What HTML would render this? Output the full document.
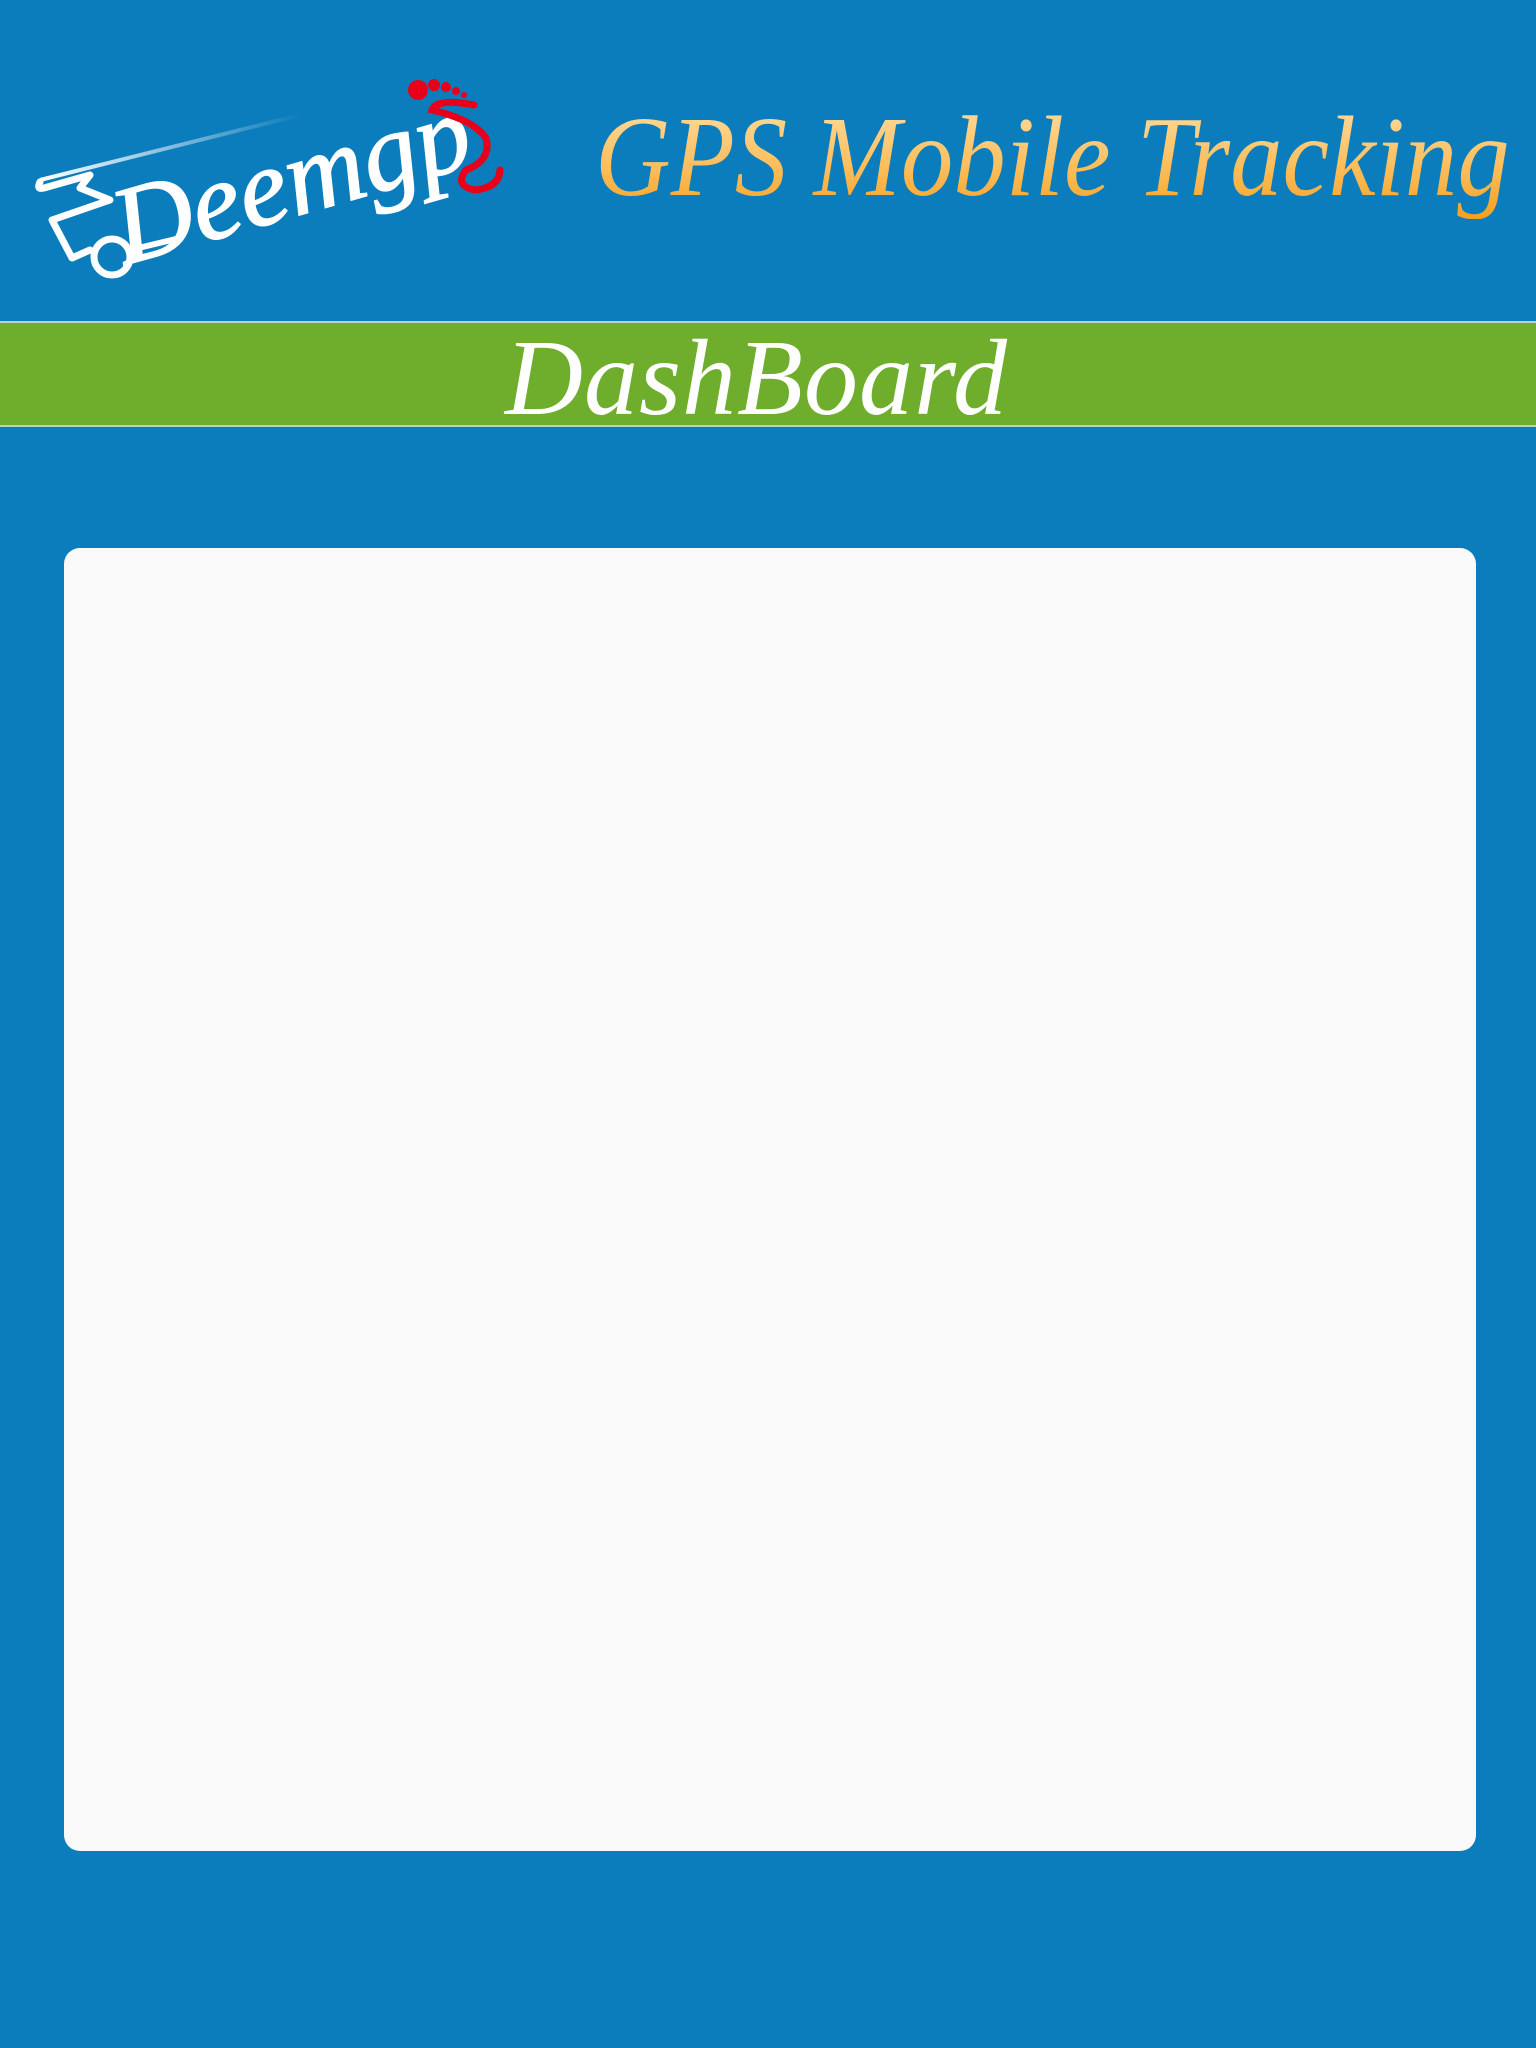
<!DOCTYPE html>
<html><head><meta charset="utf-8"><style>
html,body{margin:0;padding:0}
body{width:1536px;height:2048px;background:#0b7dbc;position:relative;overflow:hidden;font-family:"Liberation Serif",serif}
.title{position:absolute;left:595px;top:94px;font-style:italic;font-size:114px;white-space:nowrap;transform:scaleX(0.92);transform-origin:0 0;
background:linear-gradient(180deg,#ffe0a8 0%,#fcc060 55%,#f5a020 100%);-webkit-background-clip:text;background-clip:text;color:transparent;line-height:1.1}
.bar{position:absolute;left:0;top:321px;width:1536px;height:102px;background:#6fad2c;border-top:2px solid #b8d4c8;border-bottom:2px solid #b8d4c8}
.bar span{position:absolute;left:505px;top:2px;font-style:italic;font-size:108px;color:#fff;line-height:1;letter-spacing:1px}
.card{position:absolute;left:64px;top:548px;width:1412px;height:1303px;background:#f9f9f9;border-radius:16px}
</style></head><body>
<svg style="position:absolute;left:0;top:60px" width="520" height="260" viewBox="0 0 520 260">
<defs><linearGradient id="s" x1="0" x2="1"><stop offset="0" stop-color="#fff"/><stop offset="1" stop-color="#fff" stop-opacity="0"/></linearGradient></defs>
<path d="M40 120 L300 55" stroke="url(#s)" stroke-width="4" fill="none"/>
<path d="M40 122 Q36 130 44 128 L90 115 L80 128 L110 140 L52 160 L72 198 L90 190" stroke="#fff" stroke-width="7" fill="none" stroke-linecap="round" stroke-linejoin="round"/>
<circle cx="112" cy="197" r="18" stroke="#fff" stroke-width="7" fill="none"/>
<path d="M130 190 L180 178" stroke="#fff" stroke-width="6" fill="none"/>
<text x="125" y="205" transform="rotate(-16 125 205)" font-family="Liberation Serif" font-style="italic" font-size="110" fill="#fff" stroke="#fff" stroke-width="1.5">Deemgp</text>
<g fill="#e8001a"><circle cx="418" cy="30" r="10"/><circle cx="434" cy="25" r="6"/><circle cx="446" cy="27" r="5"/><circle cx="456" cy="31" r="4"/><circle cx="464" cy="35" r="3"/></g>
<path d="M474 45 Q436 38 432 50 Q474 60 486 78 Q492 100 466 110 Q454 125 474 130 Q499 128 500 110" stroke="#e8001a" stroke-width="7" fill="none" stroke-linecap="round"/>
</svg>
<div class="title">GPS Mobile Tracking</div>
<div class="bar"><span>DashBoard</span></div>
<div class="card"></div>
</body></html>
